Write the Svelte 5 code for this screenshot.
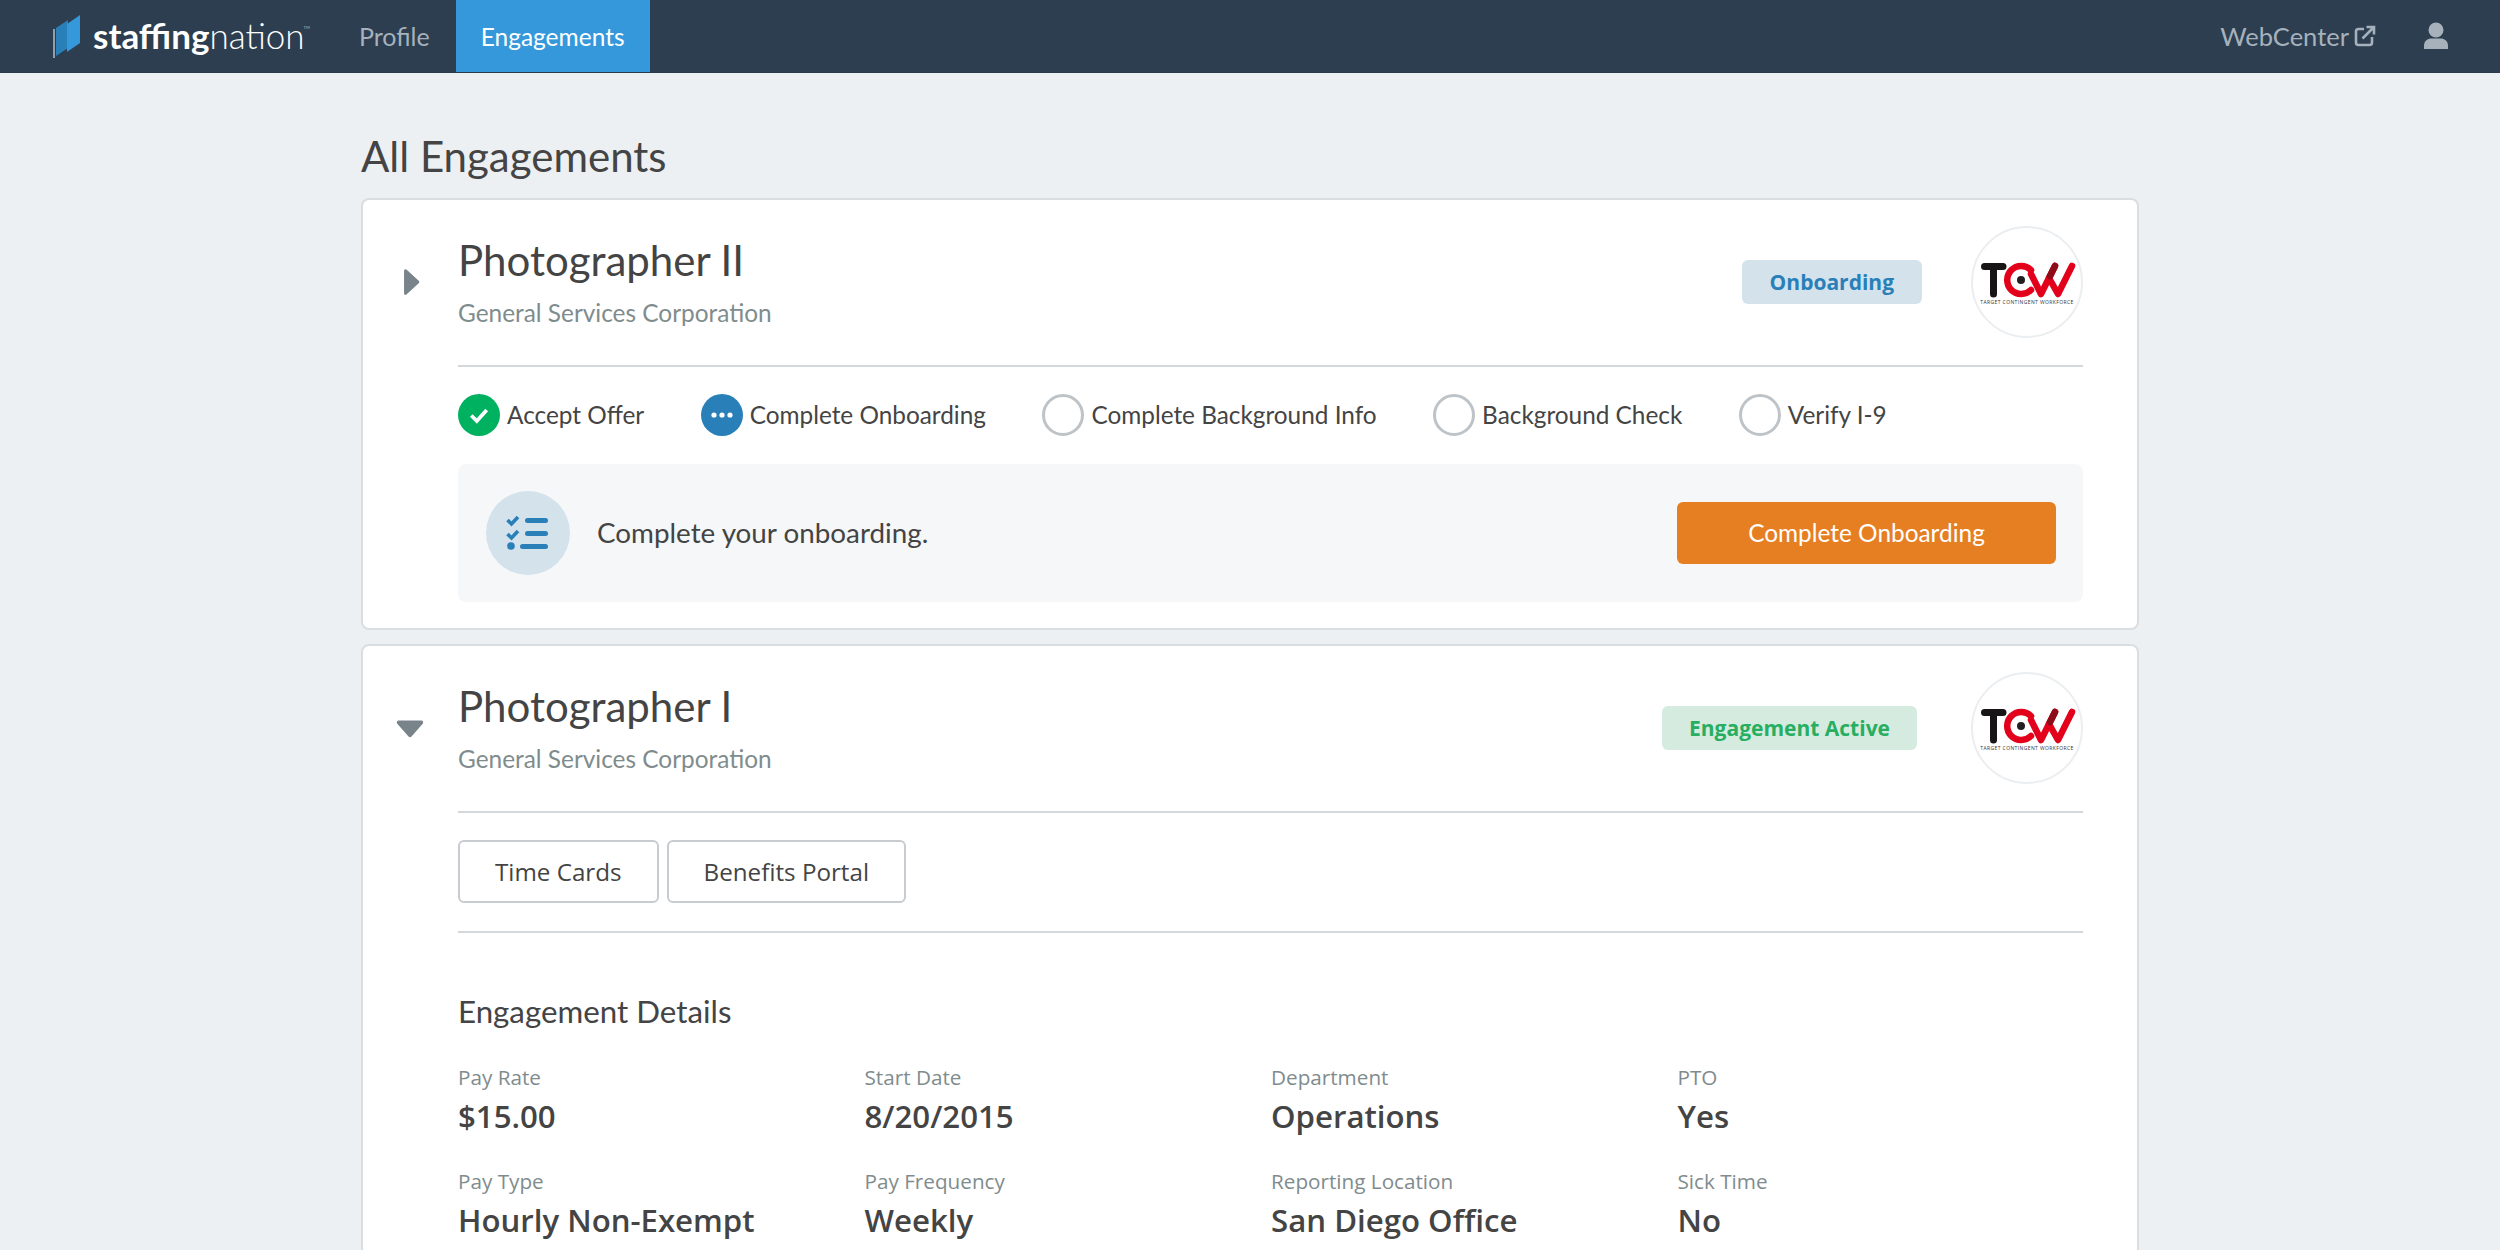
<script>
  const steps = [
    { label: 'Accept Offer', state: 'done' },
    { label: 'Complete Onboarding', state: 'active' },
    { label: 'Complete Background Info', state: 'todo' },
    { label: 'Background Check', state: 'todo' },
    { label: 'Verify I-9', state: 'todo' }
  ];
  const details = [
    ['Pay Rate', '$15.00'],
    ['Start Date', '8/20/2015'],
    ['Department', 'Operations'],
    ['PTO', 'Yes'],
    ['Pay Type', 'Hourly Non-Exempt'],
    ['Pay Frequency', 'Weekly'],
    ['Reporting Location', 'San Diego Office'],
    ['Sick Time', 'No']
  ];
</script>

{#snippet tcw()}
  <div class="logo-circle">
    <svg viewBox="0 0 112 112" width="112" height="112">
      <path d="M13.5 40.5H32M22.5 40.5V68" fill="none" stroke="#171516" stroke-width="7" stroke-linecap="round" />
      <path d="M60 44A14 14 0 1 0 60 64" fill="none" stroke="#e2001a" stroke-width="6.5" stroke-linecap="round" />
      <circle cx="50" cy="54" r="4" fill="#231f20" />
      <path d="M60 48L70 68L84 40" fill="none" stroke="#e2001a" stroke-width="6.5" stroke-linecap="round" stroke-linejoin="round" />
      <path d="M78 52L87 68L101 40" fill="none" stroke="#e2001a" stroke-width="6.5" stroke-linecap="round" stroke-linejoin="round" />
      <path d="M79 50L84 40" fill="none" stroke="#8e0b18" stroke-width="6.5" stroke-linecap="round" />
      <text x="56" y="78" text-anchor="middle" class="logo-sub">TARGET CONTINGENT WORKFORCE</text>
    </svg>
  </div>
{/snippet}

<div class="page">
  <nav class="nav">
    <div class="brand">
      <svg class="brand-mark" viewBox="0 0 28 44" width="28" height="44">
        <path d="M1 14V43" stroke="#fff" stroke-width="1" />
        <path d="M3 13L15 5V33L3 41Z" fill="#2980b9" />
        <path d="M14 9L27 0V28L14 37Z" fill="#3498db" />
      </svg>
      <span class="brand-name"><b>staffing</b>nation</span><span class="tm">TM</span>
    </div>
    <a class="tab profile" href="#profile">Profile</a>
    <a class="tab current" href="#engagements">Engagements</a>
    <div class="nav-right">
      <a class="tab webcenter" href="#webcenter">WebCenter
        <svg viewBox="0 0 22 22" width="22" height="22">
          <path d="M10 4H4.500A2.500 2.500 0 0 0 2 6.500V17.500A2.500 2.500 0 0 0 4.500 20H15.500A2.500 2.500 0 0 0 18 17.500V12M8.500 13.500L19.500 2.500M12.500 2H20V9.500" fill="none" stroke="#a6b1bb" stroke-width="2.600" />
        </svg>
      </a>
      <svg class="user" viewBox="0 0 26 28" width="26" height="28">
        <circle cx="13" cy="8" r="7.500" fill="#a6b1bb" />
        <path d="M1 27V24C1 18.500 5 16.500 8 16.500H18C21 16.500 25 18.500 25 24V27Z" fill="#a6b1bb" />
      </svg>
    </div>
  </nav>

  <main class="main">
    <h1>All Engagements</h1>

    <section class="card">
      <header class="head">
        <div class="toggle">
          <svg viewBox="0 0 16 26" width="17" height="28"><path d="M1 2.500C1 1 2.500 .5 3.500 1.500L15 12C15.500 12.600 15.500 13.400 15 14L3.500 24.500C2.500 25.500 1 25 1 23.500Z" fill="#78838a" /></svg>
        </div>
        <div class="titles">
          <h2>Photographer II</h2>
          <p>General Services Corporation</p>
        </div>
        <span class="badge blue">Onboarding</span>
        {@render tcw()}
      </header>
      <div class="body">
        <ul class="steps">
          {#each steps as s}
            <li class="step">
              <span class="dot {s.state}">
                {#if s.state === 'done'}
                  <svg viewBox="0 0 20 20" width="22" height="22"><path d="M3 10.500L8 15.500L17 5.500" fill="none" stroke="#fff" stroke-width="3.400" /></svg>
                {:else if s.state === 'active'}
                  <svg viewBox="0 0 22 6" width="22" height="6"><circle cx="3" cy="3" r="2.600" fill="#fff" /><circle cx="11" cy="3" r="2.600" fill="#fff" /><circle cx="19" cy="3" r="2.600" fill="#fff" /></svg>
                {/if}
              </span>
              {s.label}
            </li>
          {/each}
        </ul>
        <div class="panel">
          <span class="panel-icon">
            <svg viewBox="0 0 44 36" width="44" height="36">
              <path d="M1.500 5L5.500 9L12 2M1.500 19L5.500 23L12 16" fill="none" stroke="#2980b9" stroke-width="3.600" />
              <rect x="19" y="3" width="23" height="5" rx="2.500" fill="#2980b9" />
              <rect x="19" y="16" width="23" height="5" rx="2.500" fill="#2980b9" />
              <circle cx="5" cy="31" r="3.800" fill="#2980b9" />
              <rect x="14" y="29" width="28" height="5" rx="2.500" fill="#2980b9" />
            </svg>
          </span>
          <span class="panel-text">Complete your onboarding.</span>
          <button class="cta">Complete Onboarding</button>
        </div>
      </div>
    </section>

    <section class="card second">
      <header class="head">
        <div class="toggle">
          <svg viewBox="0 0 28 18" width="28" height="18"><path d="M3 .5H25C27 .5 28 2.500 26.500 4L15.500 16.500C14.500 17.500 13.500 17.500 12.500 16.500L1.500 4C0 2.500 1 .5 3 .5Z" fill="#78838a" /></svg>
        </div>
        <div class="titles">
          <h2>Photographer I</h2>
          <p>General Services Corporation</p>
        </div>
        <span class="badge green">Engagement Active</span>
        {@render tcw()}
      </header>
      <div class="body">
        <div class="links">
          <button class="link">Time Cards</button>
          <button class="link">Benefits Portal</button>
        </div>
        <h3>Engagement Details</h3>
        <dl class="grid">
          {#each details as d}
            <div class="cell">
              <dt>{d[0]}</dt>
              <dd>{d[1]}</dd>
            </div>
          {/each}
        </dl>
      </div>
    </section>
  </main>
</div>

<style>
  :global(body) { margin: 0; background: #ecf0f3; }
  .page {
    height: 1250px;
    overflow: hidden;
    background: #ecf0f3;
    font-family: Lato, "Liberation Sans", sans-serif;
    color: #444;
  }
  .nav {
    height: 72px;
    background: #2c3e50;
    border-bottom: 1px solid #2a3a4a;
    display: flex;
    align-items: stretch;
    padding-left: 53px;
  }
  .brand { display: flex; align-items: center; width: 281px; }
  .brand-mark { margin-right: 12px; margin-top: 2px; }
  .brand-name {
    font-family: Lato, sans-serif;
    font-size: 35px;
    font-weight: 300;
    color: #fff;
    line-height: 1;
    margin-top: -2px;
  }
  .brand-name b { font-weight: 700; }
  .tm { color: #bbb; font-size: 4px; margin: -18px 0 0 -1px; }
  .tab {
    display: flex;
    align-items: center;
    gap: 5px;
    padding: 0 25px;
    font-size: 24.5px;
    color: #a6b1bb;
    text-decoration: none;
  }
  .tab.profile { font-size: 25px; margin-right: 1px; }
  .tab.current { background: #3498db; color: #fff; }
  .nav-right { margin-left: auto; display: flex; align-items: center; padding-right: 51px; }
  .webcenter { padding: 0; margin-right: 47px; font-size: 25.5px; }
  .main { width: 1778px; margin: 0 auto; padding-top: 1px; }
  h1 { margin: 0; height: 124px; box-sizing: border-box; padding-top: 56px; font-size: 42px; font-weight: 400; line-height: 52px; color: #444; }
  .card {
    background: #fff;
    border: 2px solid #d8dee2;
    border-radius: 8px;
    box-sizing: border-box;
    height: 432px;
    padding: 0 54px 0 0;
  }
  .card.second { margin-top: 14px; height: 800px; }
  .head { display: flex; align-items: center; height: 165px; box-sizing: border-box; padding-bottom: 2px; }
  .toggle { width: 95px; display: flex; justify-content: flex-end; padding-right: 38px; box-sizing: border-box; }
  .second .toggle { padding-right: 34px; padding-top: 3px; }
  .titles { flex: 1; padding-bottom: 2px; }
  h2 { margin: 0; font-size: 42px; font-weight: 400; line-height: 52px; color: #444; }
  .titles p { margin: 12px 0 0; font-size: 24.4px; line-height: 30px; color: #7f8c8d; }
  .badge {
    font-family: "Open Sans", sans-serif;
    font-weight: 700;
    font-size: 21px;
    height: 44px;
    line-height: 44px;
    padding: 0 28px;
    border-radius: 6px;
  }
  .badge.blue { background: #d4e2ec; color: #2980b9; margin-right: 49px; }
  .badge.green { background: #d6ebe0; color: #27ae60; margin-right: 54px; padding: 0 27px; }
  .logo-circle { width: 112px; height: 112px; box-sizing: border-box; border: 2px solid #ebeef0; border-radius: 50%; flex: none; }
  .logo-circle svg { display: block; margin: -2px; }
  .logo-sub { font-family: "Open Sans", sans-serif; font-size: 5px; letter-spacing: .4px; fill: #333; }
  .body { margin-left: 95px; }
  .steps {
    list-style: none;
    margin: 0;
    padding: 27px 0 28px;
    border-top: 2px solid #d5d8da;
    display: flex;
    gap: 56.5px;
  }
  .step { display: flex; align-items: center; gap: 7px; font-size: 24.35px; line-height: 42px; color: #444; }
  .dot { width: 42px; height: 42px; box-sizing: border-box; border-radius: 50%; display: flex; align-items: center; justify-content: center; flex: none; }
  .dot.done { background: #00b160; }
  .dot.active { background: #2980b9; }
  .dot.todo { border: 3px solid #bdc3c7; }
  .panel {
    height: 138px;
    background: #f5f7f9;
    border-radius: 8px;
    display: flex;
    align-items: center;
    padding: 0 27px 0 28px;
  }
  .panel-icon { width: 84px; height: 84px; border-radius: 50%; background: #d4e2ec; display: flex; align-items: center; justify-content: center; flex: none; margin-right: 27px; }
  .panel-text { flex: 1; font-size: 27.8px; color: #444; padding-bottom: 2px; }
  .cta {
    width: 379px; height: 62px; border: 0; border-radius: 6px; padding: 0 0 2px;
    background: #e67e22; color: #fff;
    font-family: Lato, sans-serif; font-size: 24.4px;
  }
  .links { border-top: 2px solid #d5d8da; border-bottom: 2px solid #d5d8da; padding: 27px 0 28px; display: flex; gap: 8px; }
  .link {
    height: 63px; padding: 0 35px; background: #fff;
    border: 2px solid #c8ccd0; border-radius: 6px;
    font-family: "Open Sans", sans-serif; font-size: 24.2px; color: #444;
  }
  h3 { margin: 0; padding-top: 58px; font-size: 31.3px; font-weight: 400; line-height: 40px; color: #444; }
  .grid { display: grid; grid-template-columns: repeat(4, 406.500px); margin: 0; padding-top: 32px; row-gap: 19px; }
  .cell { height: 85px; }
  dt { font-family: "Open Sans", sans-serif; font-size: 20.7px; line-height: 28px; color: #7f8c8d; }
  dd { margin: 3px 0 0; font-family: "Open Sans", sans-serif; font-size: 31.2px; font-weight: 600; line-height: 44px; color: #444; }
</style>
